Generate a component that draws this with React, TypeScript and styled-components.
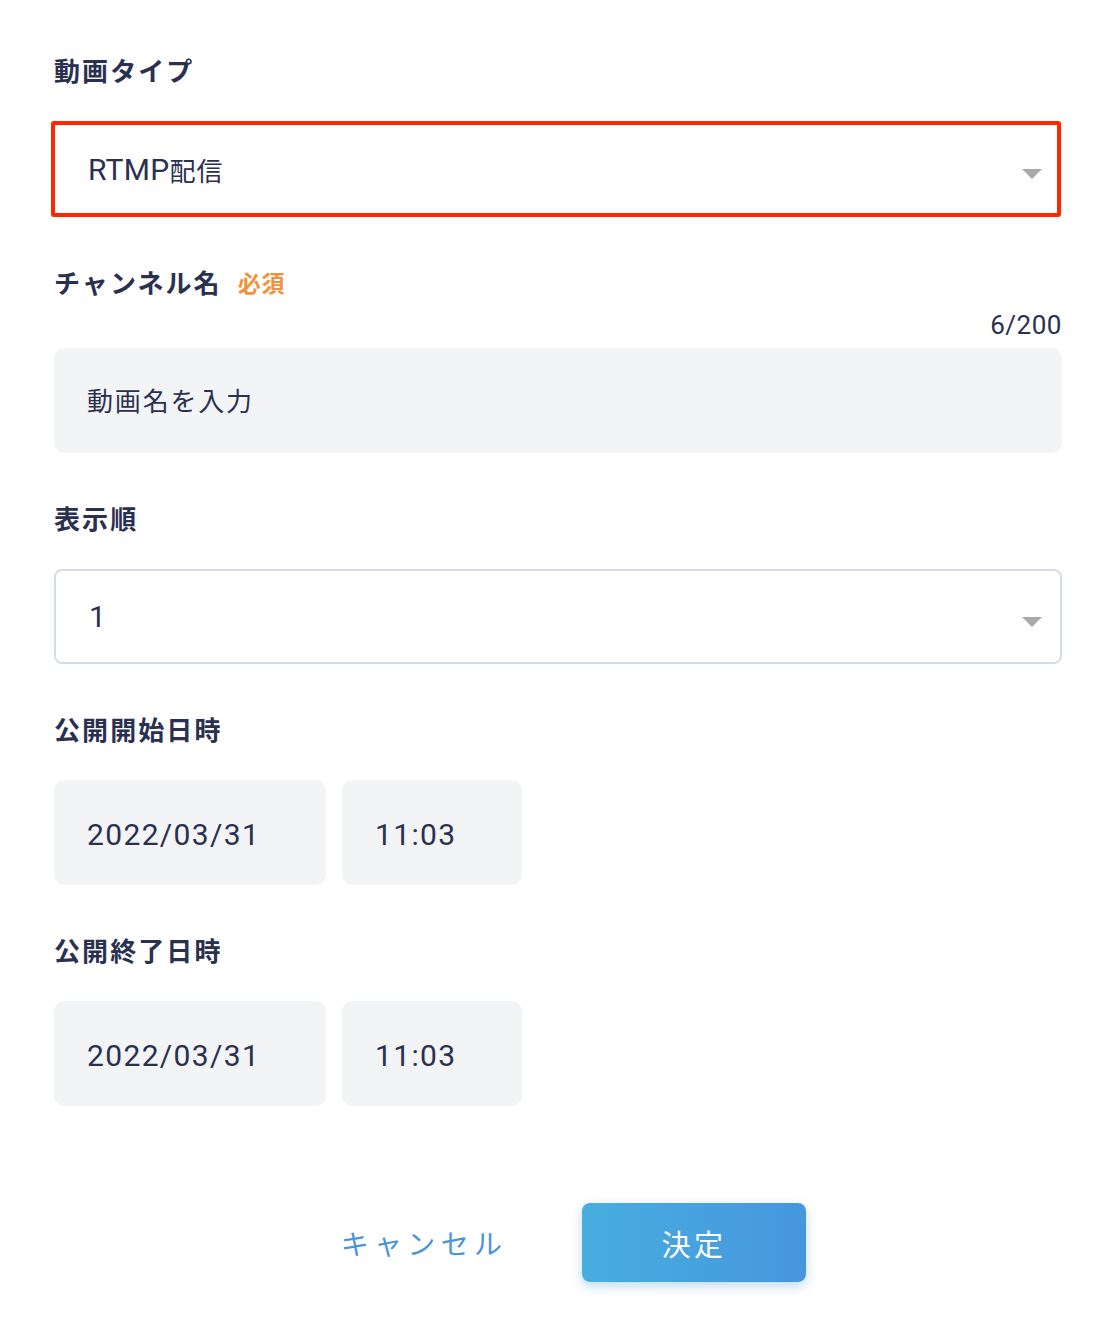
import styled, { createGlobalStyle } from "styled-components";

const GlobalStyle = createGlobalStyle`
  body {
    margin: 0;
    background: #ffffff;
    font-family: "Noto Sans CJK JP", "Noto Sans", sans-serif;
    color: #2a3050;
  }
  * {
    box-sizing: border-box;
  }
`;

const latinFont = `Roboto, "Noto Sans CJK JP", sans-serif`;

const Form = styled.form`
  padding: 50px 40px 60px 54px;
  display: flex;
  flex-direction: column;
`;

const Section = styled.section`
  display: flex;
  flex-direction: column;
  & + & {
    margin-top: 45px;
  }
`;

const LabelRow = styled.div`
  display: flex;
  align-items: center;
  gap: 16px;
  height: 39px;
  margin-bottom: 32px;
`;

const Label = styled.h2`
  margin: 0;
  font-size: 26px;
  line-height: 39px;
  font-weight: 700;
  letter-spacing: 0.08em;
  color: #2a3050;
`;

const Required = styled.span`
  font-size: 23px;
  font-weight: 700;
  color: #f0923c;
  letter-spacing: 0.04em;
`;

const Counter = styled.div`
  align-self: flex-end;
  margin: -26px 0 5px;
  font-family: ${latinFont};
  font-size: 26px;
  line-height: 36px;
  letter-spacing: 0.02em;
  color: #2a3050;
`;

const SelectBox = styled.div<{ $highlight?: boolean }>`
  position: relative;
  display: flex;
  align-items: center;
  height: ${(p) => (p.$highlight ? "96px" : "95px")};
  padding: 0 0 0 33px;
  margin-left: ${(p) => (p.$highlight ? "-3px" : "0")};
  margin-right: ${(p) => (p.$highlight ? "1px" : "0")};
  background: #ffffff;
  border: ${(p) => (p.$highlight ? "4px solid #ff2600" : "2px solid #d6dde6")};
  border-radius: ${(p) => (p.$highlight ? "3px" : "8px")};
  font-size: 26px;
  letter-spacing: 0.04em;
  color: #2a3050;
`;

const Latin = styled.span`
  font-family: ${latinFont};
  font-size: 30px;
  letter-spacing: 0.01em;
`;

const Arrow = styled.span<{ $highlight?: boolean }>`
  position: absolute;
  right: ${(p) => (p.$highlight ? "15px" : "18px")};
  top: 50%;
  width: 0;
  height: 0;
  border-left: 10px solid transparent;
  border-right: 10px solid transparent;
  border-top: 10px solid #aaaaaa;
`;

const TextField = styled.div<{ $width?: number; $latin?: boolean }>`
  display: flex;
  align-items: center;
  width: ${(p) => (p.$width ? `${p.$width}px` : "100%")};
  height: 105px;
  padding: ${(p) => (p.$latin ? "3px 0 0 33px" : "0 0 2px 33px")};
  background: #f3f4f6;
  border-radius: 10px;
  font-family: ${(p) => (p.$latin ? latinFont : "inherit")};
  font-size: ${(p) => (p.$latin ? "30px" : "26px")};
  letter-spacing: ${(p) => (p.$latin ? "0.045em" : "0.07em")};
  color: #2a3050;
`;

const DateRow = styled.div`
  display: flex;
  gap: 16px;
`;

const Actions = styled.div`
  display: flex;
  justify-content: center;
  gap: 48px;
  margin-top: 97px;
`;

const CancelButton = styled.button`
  width: 224px;
  height: 79px;
  padding: 0 0 0 4px;
  border: none;
  background: transparent;
  font-family: inherit;
  font-size: 28px;
  letter-spacing: 0.19em;
  color: #4a94dc;
  cursor: pointer;
`;

const SubmitButton = styled.button`
  width: 224px;
  height: 79px;
  border: none;
  border-radius: 8px;
  background: linear-gradient(90deg, #47aedf 0%, #4696de 100%);
  box-shadow: 0 4px 12px rgba(70, 150, 222, 0.35);
  font-family: inherit;
  font-size: 29px;
  letter-spacing: 0.12em;
  color: #ffffff;
  cursor: pointer;
`;

function DateTime({ date, time }: { date: string; time: string }) {
  return (
    <DateRow>
      <TextField $width={272} $latin>
        {date}
      </TextField>
      <TextField $width={180} $latin>
        {time}
      </TextField>
    </DateRow>
  );
}

export default function App() {
  return (
    <>
      <GlobalStyle />
      <Form onSubmit={(e) => e.preventDefault()}>
        <Section>
          <LabelRow>
            <Label>動画タイプ</Label>
          </LabelRow>
          <SelectBox $highlight>
            <Latin>RTMP</Latin>配信
            <Arrow $highlight />
          </SelectBox>
        </Section>

        <Section>
          <LabelRow>
            <Label>チャンネル名</Label>
            <Required>必須</Required>
          </LabelRow>
          <Counter>6/200</Counter>
          <TextField>動画名を入力</TextField>
        </Section>

        <Section>
          <LabelRow>
            <Label>表示順</Label>
          </LabelRow>
          <SelectBox>
            <Latin>1</Latin>
            <Arrow />
          </SelectBox>
        </Section>

        <Section>
          <LabelRow>
            <Label>公開開始日時</Label>
          </LabelRow>
          <DateTime date="2022/03/31" time="11:03" />
        </Section>

        <Section>
          <LabelRow>
            <Label>公開終了日時</Label>
          </LabelRow>
          <DateTime date="2022/03/31" time="11:03" />
        </Section>

        <Actions>
          <CancelButton type="button">キャンセル</CancelButton>
          <SubmitButton type="submit">決定</SubmitButton>
        </Actions>
      </Form>
    </>
  );
}
